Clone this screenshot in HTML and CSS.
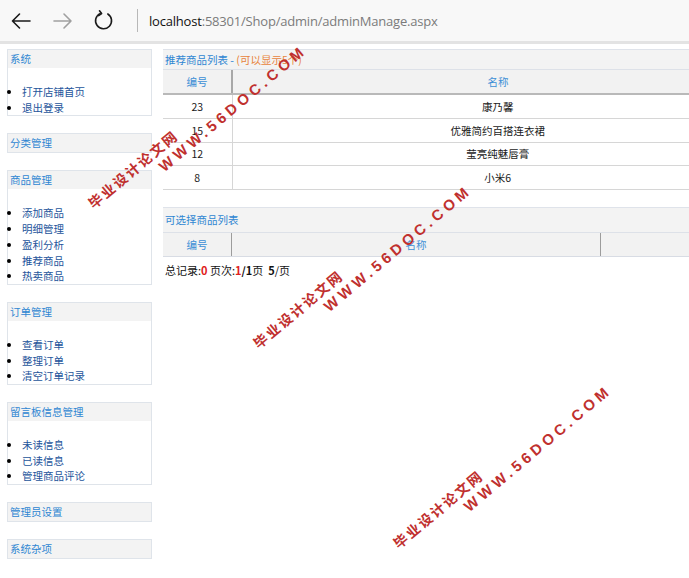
FILE: index.html
```html
<!DOCTYPE html>
<html lang="zh-CN">
<head>
<meta charset="utf-8">
<title>adminManage</title>
<link rel="stylesheet" href="styles.css">
</head>
<body>
<div class="chrome">
  <svg class="nav" width="120" height="41" viewBox="0 0 120 41">
    <g fill="none" stroke-width="1.6" stroke-linecap="round" stroke-linejoin="round">
      <path d="M12.5 21 H30 M12.5 21 L19.5 14 M12.5 21 L19.5 28" stroke="#1a1a1a"/>
      <path d="M71 21 H54 M71 21 L64 14 M71 21 L64 28" stroke="#a0a0a0"/>
      <path d="M107.8 14 A8 8 0 1 1 100 13.6" stroke="#1a1a1a"/>
      <path d="M99.5 10.8 L101.6 13.6 L98.6 15.6" stroke="#1a1a1a"/>
    </g>
  </svg>
  <div class="sep"></div>
  <div class="url"><span class="host">localhost</span>:58301/Shop/admin/adminManage.aspx</div>
</div>

<div class="page">
  <div class="side">
    <div class="box">
      <div class="box-head">系统</div>
      <ul class="box-list">
        <li>打开店铺首页</li>
        <li>退出登录</li>
      </ul>
    </div>
    <div class="box">
      <div class="box-head">分类管理</div>
    </div>
    <div class="box">
      <div class="box-head">商品管理</div>
      <ul class="box-list">
        <li>添加商品</li>
        <li>明细管理</li>
        <li>盈利分析</li>
        <li>推荐商品</li>
        <li>热卖商品</li>
      </ul>
    </div>
    <div class="box">
      <div class="box-head">订单管理</div>
      <ul class="box-list">
        <li>查看订单</li>
        <li>整理订单</li>
        <li>清空订单记录</li>
      </ul>
    </div>
    <div class="box">
      <div class="box-head">留言板信息管理</div>
      <ul class="box-list">
        <li>未读信息</li>
        <li>已读信息</li>
        <li>管理商品评论</li>
      </ul>
    </div>
    <div class="box">
      <div class="box-head">管理员设置</div>
    </div>
    <div class="box">
      <div class="box-head">系统杂项</div>
    </div>
  </div>

  <div class="main">
    <div class="panel">
      <div class="panel-title">推荐商品列表 - <span class="note">(可以显示5个)</span></div>
      <table class="grid">
        <tr class="head"><th class="c-id">编号</th><th>名称</th></tr>
        <tr><td class="c-id">23</td><td>康乃馨</td></tr>
        <tr><td class="c-id">15</td><td>优雅简约百搭连衣裙</td></tr>
        <tr><td class="c-id">12</td><td>莹亮纯魅唇膏</td></tr>
        <tr><td class="c-id">8</td><td>小米6</td></tr>
      </table>
    </div>

    <div class="panel panel-2">
      <div class="panel-title tall">可选择商品列表</div>
      <table class="grid grid-2">
        <tr class="head"><th class="c-id">编号</th><th class="c-name">名称</th><th></th></tr>
      </table>
    </div>

    <div class="pager">总记录:<b class="red">0</b> 页次:<b class="red">1</b><b>/1</b>页&nbsp; <b>5</b>/页</div>
  </div>
</div>

<div class="mark m1"><div class="cn">毕业设计论文网</div><div class="en">WWW.56DOC.COM</div></div>
<div class="mark m2"><div class="cn">毕业设计论文网</div><div class="en">WWW.56DOC.COM</div></div>
<div class="mark m3"><div class="cn">毕业设计论文网</div><div class="en">WWW.56DOC.COM</div></div>
</body>
</html>
```

FILE: styles.css
```css
html, body {
  margin: 0;
  padding: 0;
  overflow: hidden;
  background: #ffffff;
}
body {
  font-family: "Noto Sans CJK SC", "Noto Sans", sans-serif;
  font-size: 10.5px;
  color: #1a1a1a;
}

/* browser chrome */
.chrome {
  height: 41px;
  display: flex;
  align-items: center;
  background: #f8f8f8;
  border-bottom: 3px solid #e3e3e3;
}
.nav { flex: none; display: block; }
.sep {
  flex: none;
  width: 1px;
  height: 23px;
  background: #b8b8b8;
  margin-left: 17px;
}
.url {
  margin-left: 11px;
  font-family: "Open Sans", "Noto Sans", sans-serif;
  font-size: 13px;
  color: #7b7b7b;
  letter-spacing: -0.2px;
  white-space: nowrap;
}
.host { color: #111111; }

/* page */
.page {
  display: flex;
  align-items: flex-start;
  gap: 11px;
  padding: 5px 0 0 7px;
  width: 800px;
}
.side {
  flex: none;
  width: 145px;
}
.box {
  box-sizing: border-box;
  width: 145px;
  border: 1px solid #dfe4ea;
  margin-bottom: 17px;
  background: #ffffff;
}
.box-head {
  height: 18px;
  line-height: 18px;
  padding-left: 2px;
  background: #f3f3f3;
  color: #2f86d2;
}
.box-list {
  margin: 16px 0 0 0;
  padding: 0 0 0 14px;
  color: #24549b;
  line-height: 15.7px;
}
.box-list li::marker { color: #000000; }

/* main area */
.main {
  flex: none;
  width: 600px;
}
.panel {
  border-top: 1px solid #dfe3ea;
}
.panel-title {
  height: 19px;
  line-height: 19px;
  padding-left: 2px;
  background: #f3f3f3;
  color: #2f86d2;
  border-bottom: 1px solid #dde1e8;
}
.panel-title.tall {
  height: 24px;
  line-height: 24px;
}
.note { color: #e8843c; }
.panel-2 { margin-top: 17px; }

.grid {
  width: 100%;
  border-collapse: collapse;
  table-layout: fixed;
}
.grid th, .grid td {
  padding: 0;
  text-align: center;
  font-weight: normal;
}
.grid .head th {
  height: 23px;
  background: #f2f2f2;
  color: #3d8fd6;
  border-bottom: 2px solid #b9b9b9;
  border-right: 2px solid #a8a8a8;
}
.grid .head th:last-child { border-right: none; }
.grid td {
  height: 22.8px;
  border-bottom: 1px solid #d6d6d6;
  border-right: 1px solid #d6d6d6;
  color: #1a1a1a;
}
.grid td:last-child { border-right: none; }
.grid .c-id { width: 68px; }
.grid-2 .head th {
  height: 23px;
  border-bottom: 1px solid #d8dce4;
  border-right: 1px solid #9c9c9c;
}
.grid-2 .head th:last-child { border-right: none; }
.grid-2 .c-name { width: 368px; }

.pager {
  margin-top: 5px;
  padding-left: 2px;
  font-size: 11px;
  line-height: 16px;
  color: #111111;
}
.pager b { font-weight: bold; }
.red { color: #e02020; }

/* watermark overlay */
.mark {
  position: absolute;
  transform: rotate(-40deg);
  transform-origin: 0 0;
  color: #c0302e;
  font-weight: bold;
  white-space: nowrap;
  pointer-events: none;
}
.mark .cn {
  font-family: "Noto Sans CJK SC", sans-serif;
  font-size: 14px;
  letter-spacing: 2px;
  line-height: 18px;
}
.mark .en {
  font-family: "Liberation Sans", sans-serif;
  font-size: 15px;
  letter-spacing: 4px;
  line-height: 18px;
  margin-left: 78px;
}
.m1 { left: 84px; top: 198px; }
.m2 { left: 249px; top: 338px; }
.m3 { left: 389px; top: 538px; }
```
